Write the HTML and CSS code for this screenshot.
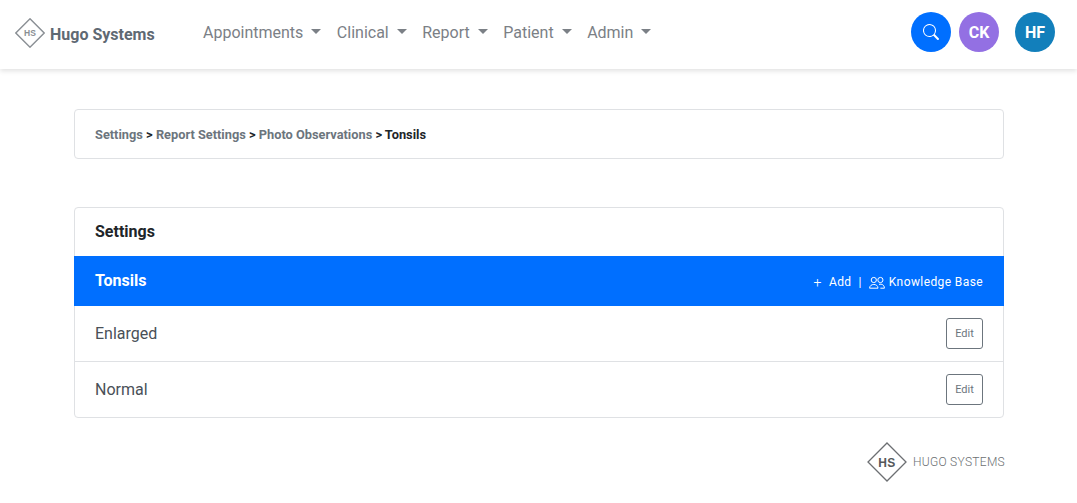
FILE: index.html
```html
<!DOCTYPE html>
<html lang="en">
<head>
  <meta charset="UTF-8">
  <meta name="viewport" content="width=device-width, initial-scale=1.0">
  <title>Settings - Tonsils</title>
  <link rel="stylesheet" href="styles.css">
</head>
<body>
  <header class="navbar">
    <a class="brand" href="#">
      <svg class="brand-logo" viewBox="0 0 30 30" width="30" height="30">
        <path d="M15 .8 29.2 15 15 29.2 .8 15Z" fill="none" stroke="#8a8f94" stroke-width="1.4"/>
        <text x="15" y="18" text-anchor="middle" class="logo-text-sm">HS</text>
      </svg>
      <span>Hugo Systems</span>
    </a>
    <nav class="nav-links">
      <a href="#" class="nav-link">Appointments</a>
      <a href="#" class="nav-link">Clinical</a>
      <a href="#" class="nav-link">Report</a>
      <a href="#" class="nav-link">Patient</a>
      <a href="#" class="nav-link">Admin</a>
    </nav>
    <div class="nav-actions">
      <button class="circle circle-search" aria-label="Search">
        <svg viewBox="0 0 16 16" width="16" height="16" fill="#fff">
          <path d="M11.742 10.344a6.5 6.5 0 1 0-1.397 1.398h-.001l.043.045 3.85 3.85a1 1 0 0 0 1.415-1.414l-3.85-3.85-.06-.029zM12 6.5a5.5 5.5 0 1 1-11 0 5.5 5.5 0 0 1 11 0z"/>
        </svg>
      </button>
      <div class="circle circle-ck">CK</div>
      <div class="circle circle-hf">HF</div>
    </div>
  </header>

  <main class="content">
    <div class="card crumbs">
      <a href="#">Settings</a> &gt; <a href="#">Report Settings</a> &gt; <a href="#">Photo Observations</a> &gt; <span class="current">Tonsils</span>
    </div>

    <div class="card settings">
      <div class="settings-title">Settings</div>
      <div class="settings-head">
        <span class="head-name">Tonsils</span>
        <div class="head-actions">
          <span class="plus">+</span>
          <a href="#">Add</a>
          <span class="sep">|</span>
          <svg viewBox="0 0 16 16" width="16" height="16" fill="none" stroke="#fff" stroke-width="1">
            <circle cx="4.8" cy="6" r="2.6"/>
            <circle cx="11.4" cy="6" r="2.6"/>
            <path d="M.6 14.2c0-5 8.4-5 8.4 0zM10 10.4c2.8-.8 5.4.6 5.4 3.8h-4"/>
          </svg>
          <a href="#" class="kb-link">Knowledge Base</a>
        </div>
      </div>
      <div class="row">
        <span>Enlarged</span>
        <button class="btn-edit">Edit</button>
      </div>
      <div class="row">
        <span>Normal</span>
        <button class="btn-edit">Edit</button>
      </div>
    </div>

    <div class="footer-logo">
      <svg viewBox="0 0 40 40" width="40" height="40">
        <path d="M20 1 39 20 20 39 1 20Z" fill="none" stroke="#6c6f72" stroke-width="1.3"/>
        <text x="20" y="24.5" text-anchor="middle" class="logo-text-lg">HS</text>
      </svg>
      <span>HUGO SYSTEMS</span>
    </div>
  </main>
</body>
</html>
```

FILE: styles.css
```css
* {
  margin: 0;
  padding: 0;
  box-sizing: border-box;
}

body {
  font-family: Roboto, 'Liberation Sans', sans-serif;
  background: #fff;
  color: #212529;
}

a {
  color: inherit;
  text-decoration: none;
}

.navbar {
  display: flex;
  align-items: center;
  height: 69px;
  padding: 0 22px 0 15px;
  background: #fff;
  box-shadow: 0 2px 5px rgba(0, 0, 0, 0.12);
}

.brand {
  display: flex;
  align-items: center;
  gap: 5px;
  width: 188px;
  margin-bottom: 3px;
  font-size: 16px;
  font-weight: 700;
  color: #5f6973;
}

.brand span {
  margin-top: 3px;
}

.logo-text-sm {
  font: 700 8.5px 'Liberation Sans', sans-serif;
  fill: #8a8f94;
}

.logo-text-lg {
  font: 700 12px 'Liberation Sans', sans-serif;
  fill: #55585b;
}

.nav-links {
  display: flex;
  gap: 15.5px;
  margin-bottom: 5px;
}

.nav-link {
  display: flex;
  align-items: center;
  font-size: 16px;
  color: #7b8086;
}

.nav-link::after {
  content: "";
  margin: 0 0 2px 8px;
  border-top: 5px solid #7b8086;
  border-left: 5px solid transparent;
  border-right: 5px solid transparent;
}

.nav-actions {
  display: flex;
  margin-left: auto;
  margin-bottom: 5px;
  gap: 8px;
}

.circle {
  display: flex;
  align-items: center;
  justify-content: center;
  width: 40px;
  height: 40px;
  border: none;
  border-radius: 50%;
  color: #fff;
  font-size: 16px;
  font-weight: 700;
}

.circle-search {
  background: #006fff;
}

.circle-ck {
  background: #9370e3;
}

.circle-hf {
  background: #127fbb;
  margin-left: 8px;
}

.content {
  width: 930px;
  margin-left: 74px;
  padding-top: 40px;
}

.card {
  background: #fff;
  border: 1px solid #dfe1e4;
  border-radius: 4px;
}

.crumbs {
  display: block;
  height: 50px;
  padding: 0 20px;
  line-height: 50px;
  font-size: 12.8px;
  font-weight: 700;
  color: #212529;
  margin-bottom: 48px;
}

.crumbs a {
  color: #6c757d;
}

.settings-title {
  height: 48px;
  padding: 0 20px;
  line-height: 47px;
  font-size: 16px;
  font-weight: 700;
}

.settings-head {
  display: flex;
  align-items: center;
  justify-content: space-between;
  height: 50px;
  margin: 0 -1px;
  padding: 0 21px 1px;
  background: #006fff;
  color: #fff;
}

.head-name {
  font-size: 16px;
  font-weight: 700;
}

.head-actions {
  display: flex;
  align-items: center;
  gap: 7px;
  margin-top: 2px;
  font-size: 12px;
  letter-spacing: 0.4px;
}

.plus {
  font-size: 14px;
  font-weight: 300;
}

.kb-link {
  margin-left: -3px;
}

.row {
  display: flex;
  align-items: center;
  justify-content: space-between;
  height: 56px;
  padding: 0 20px;
  font-size: 16px;
  color: #495057;
  border-bottom: 1px solid #dfe1e4;
}

.row:last-child {
  height: 55px;
  border-bottom: none;
}

.btn-edit {
  width: 37px;
  height: 31px;
  background: #fff;
  border: 1px solid #6c757d;
  border-radius: 3px;
  color: #6c757d;
  font-family: inherit;
  font-size: 11px;
}

.footer-logo {
  display: flex;
  align-items: center;
  justify-content: flex-end;
  gap: 6px;
  margin-top: 24px;
  margin-right: -1px;
  font-size: 12px;
  font-weight: 300;
  color: #6c6f72;
  letter-spacing: 0.3px;
}
```
